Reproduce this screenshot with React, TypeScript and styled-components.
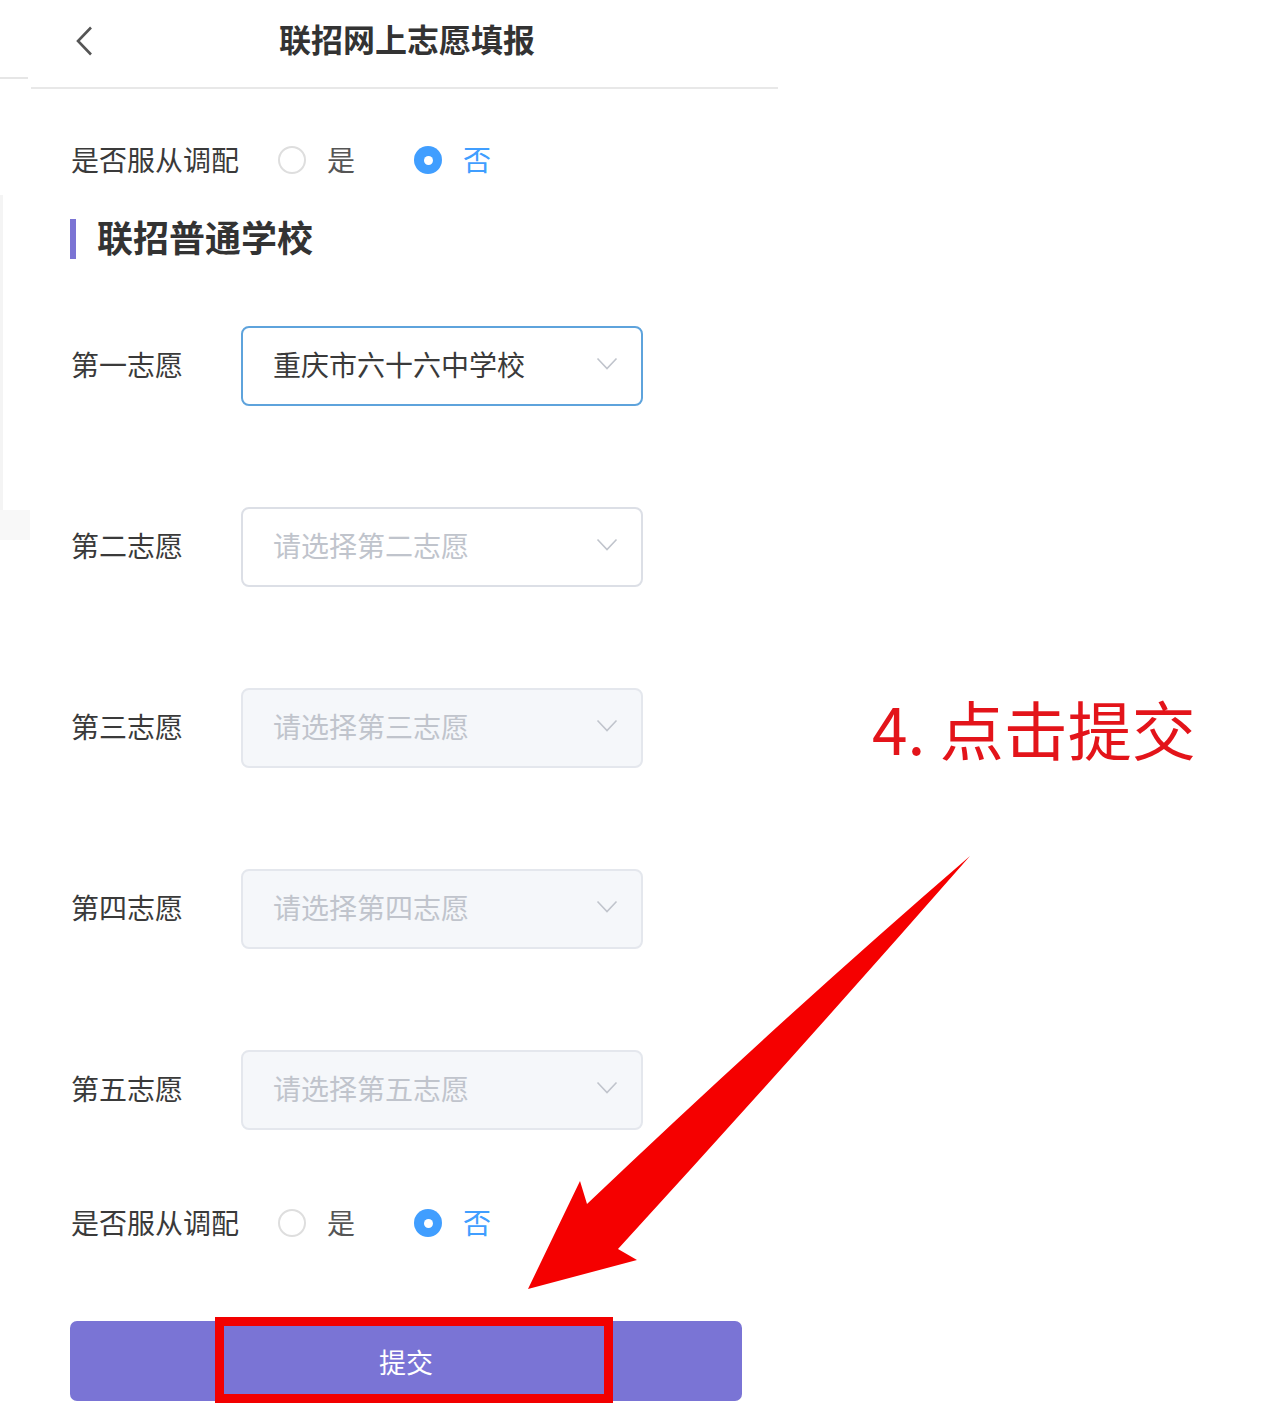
import React from "react";
import styled, { createGlobalStyle } from "styled-components";

const GlobalStyle = createGlobalStyle`
  html, body { margin: 0; padding: 0; background: #ffffff; }
  body { font-family: "Noto Sans CJK SC", "Noto Sans", sans-serif; color: #333; }
  * { box-sizing: border-box; }
`;

const Page = styled.div`
  position: relative;
  width: 1280px;
  height: 1422px;
  display: flex;
  overflow: hidden;
  background: #fff;
`;

const LeftEdge = styled.div`
  width: 31px;
  flex: none;
  display: flex;
  flex-direction: column;
`;

const EdgeLine = styled.div`
  margin-top: 77px;
  width: 28px;
  height: 2px;
  background: #e6e6e6;
`;

const EdgeFaint = styled.div`
  margin-top: 116px;
  height: 315px;
  width: 3px;
  background: #f4f4f4;
`;

const EdgeBlock = styled.div`
  height: 30px;
  width: 30px;
  background: #f8f8f8;
`;

const Phone = styled.div`
  width: 747px;
  flex: none;
  display: flex;
  flex-direction: column;
`;

const Header = styled.header`
  height: 89px;
  border-bottom: 2px solid #e8e8e8;
  display: grid;
  grid-template-columns: 1fr auto 1fr;
  align-items: start;
  padding-left: 5px;
`;

const Back = styled.div`
  margin-left: 39px;
  margin-top: 26px;
  width: 18px;
  height: 30px;
  display: flex;
`;

const Title = styled.h1`
  margin: 16px 0 0;
  font-size: 32px;
  line-height: 44px;
  font-weight: 700;
  color: #333;
  letter-spacing: 0;
`;

const Form = styled.div`
  display: flex;
  flex-direction: column;
  padding: 0 36px 0 39px;
`;

const RadioRow = styled.div<{ $top: number }>`
  margin-top: ${(p) => p.$top}px;
  height: 40px;
  display: flex;
  align-items: center;
`;

const RowLabel = styled.span`
  font-size: 28px;
  line-height: 40px;
  padding-bottom: 3px;
  color: #3a3a3a;
  margin-left: 1px;
`;

const Option = styled.label<{ $gap: number }>`
  display: flex;
  align-items: center;
  margin-left: ${(p) => p.$gap}px;
  gap: 21px;
`;

const RadioDot = styled.span<{ $on?: boolean }>`
  width: 28px;
  height: 28px;
  border-radius: 50%;
  flex: none;
  border: ${(p) => (p.$on ? "none" : "2px solid #dedede")};
  background: ${(p) => (p.$on ? "#409eff" : "#fff")};
  display: flex;
  align-items: center;
  justify-content: center;
  &::after {
    content: "";
    display: ${(p) => (p.$on ? "block" : "none")};
    width: 9px;
    height: 9px;
    border-radius: 50%;
    background: #fff;
  }
`;

const OptionText = styled.span<{ $on?: boolean }>`
  font-size: 28px;
  line-height: 40px;
  padding-bottom: 3px;
  color: ${(p) => (p.$on ? "#409eff" : "#555")};
`;

const Section = styled.div`
  margin-top: 39px;
  height: 40px;
  display: flex;
  align-items: center;
  gap: 21px;
`;

const SectionBar = styled.span`
  width: 6px;
  height: 40px;
  background: #7b74d4;
`;

const SectionTitle = styled.h2`
  margin: 0;
  font-size: 36px;
  line-height: 40px;
  padding-bottom: 6px;
  font-weight: 700;
  color: #333;
`;

const Choices = styled.div`
  margin-top: 67px;
  display: flex;
  flex-direction: column;
  gap: 101px;
`;

const ChoiceRow = styled.div`
  display: flex;
  align-items: center;
  height: 80px;
`;

const ChoiceLabel = styled.span`
  width: 170px;
  flex: none;
  font-size: 28px;
  line-height: 40px;
  padding-bottom: 4px;
  color: #3a3a3a;
  margin-left: 1px;
`;

type Variant = "active" | "empty" | "disabled";

const SelectBox = styled.div<{ $variant: Variant }>`
  width: 402px;
  height: 80px;
  border-radius: 8px;
  border: 2px solid
    ${(p) =>
      p.$variant === "active" ? "#5ea3dc" : p.$variant === "empty" ? "#dcdfe6" : "#e4e7ed"};
  background: ${(p) => (p.$variant === "disabled" ? "#f5f7fa" : "#fff")};
  display: flex;
  align-items: center;
  justify-content: space-between;
  padding: 0 23px 0 30px;
`;

const SelectText = styled.span<{ $value?: boolean }>`
  font-size: 28px;
  line-height: 40px;
  padding-bottom: 4px;
  color: ${(p) => (p.$value ? "#3a3a3a" : "#c0c4cc")};
`;

const ChevronWrap = styled.span`
  display: flex;
  margin-bottom: 4px;
`;

const Chevron = () => (
  <ChevronWrap>
    <svg width="22" height="14" viewBox="0 0 22 14" fill="none">
      <polyline points="1.5,1.5 11,11.5 20.5,1.5" stroke="#c0c4cc" strokeWidth="1.6" />
    </svg>
  </ChevronWrap>
);

const Submit = styled.button`
  margin-top: 78px;
  width: 672px;
  height: 80px;
  border: none;
  border-radius: 7px;
  background: #7a74d5;
  color: #fff;
  font-family: "Noto Sans CJK SC", sans-serif;
  font-size: 27px;
  display: flex;
  align-items: center;
  justify-content: center;
  padding: 0;
`;

const Highlight = styled.div`
  position: absolute;
  left: 215px;
  top: 1317px;
  width: 398px;
  height: 86px;
  border: 9px solid #f20000;
  pointer-events: none;
`;

const Annotation = styled.div`
  position: absolute;
  left: 872px;
  top: 695px;
  font-size: 64px;
  line-height: 64px;
  color: #e3141a;
  white-space: nowrap;
  font-family: "Noto Sans CJK SC", "Noto Sans", sans-serif;
`;

const ArrowLayer = styled.svg`
  position: absolute;
  left: 0;
  top: 0;
  pointer-events: none;
`;

const choices: { label: string; text: string; variant: Variant }[] = [
  { label: "第一志愿", text: "重庆市六十六中学校", variant: "active" },
  { label: "第二志愿", text: "请选择第二志愿", variant: "empty" },
  { label: "第三志愿", text: "请选择第三志愿", variant: "disabled" },
  { label: "第四志愿", text: "请选择第四志愿", variant: "disabled" },
  { label: "第五志愿", text: "请选择第五志愿", variant: "disabled" },
];

const Obey = ({ top }: { top: number }) => (
  <RadioRow $top={top}>
    <RowLabel>是否服从调配</RowLabel>
    <Option $gap={39}>
      <RadioDot />
      <OptionText>是</OptionText>
    </Option>
    <Option $gap={59}>
      <RadioDot $on />
      <OptionText $on>否</OptionText>
    </Option>
  </RadioRow>
);

export default function App() {
  return (
    <>
      <GlobalStyle />
      <Page>
        <LeftEdge>
          <EdgeLine />
          <EdgeFaint />
          <EdgeBlock />
        </LeftEdge>
        <Phone>
          <Header>
            <Back>
              <svg width="18" height="30" viewBox="0 0 18 30" fill="none">
                <polyline points="16,1.5 3,15 16,28.5" stroke="#555" strokeWidth="2.6" />
              </svg>
            </Back>
            <Title>联招网上志愿填报</Title>
            <span />
          </Header>
          <Form>
            <Obey top={51} />
            <Section>
              <SectionBar />
              <SectionTitle>联招普通学校</SectionTitle>
            </Section>
            <Choices>
              {choices.map((c) => (
                <ChoiceRow key={c.label}>
                  <ChoiceLabel>{c.label}</ChoiceLabel>
                  <SelectBox $variant={c.variant}>
                    <SelectText $value={c.variant === "active"}>{c.text}</SelectText>
                    <Chevron />
                  </SelectBox>
                </ChoiceRow>
              ))}
            </Choices>
            <Obey top={73} />
            <Submit>提交</Submit>
          </Form>
        </Phone>
        <Annotation>4. 点击提交</Annotation>
        <ArrowLayer width="1280" height="1422" viewBox="0 0 1280 1422">
          <path
            d="M970,856 Q780,1020 587,1204 L580,1181 L528,1289 L637,1260 L618,1249 Q800,1050 970,856 Z"
            fill="#f50000"
          />
        </ArrowLayer>
        <Highlight />
      </Page>
    </>
  );
}
